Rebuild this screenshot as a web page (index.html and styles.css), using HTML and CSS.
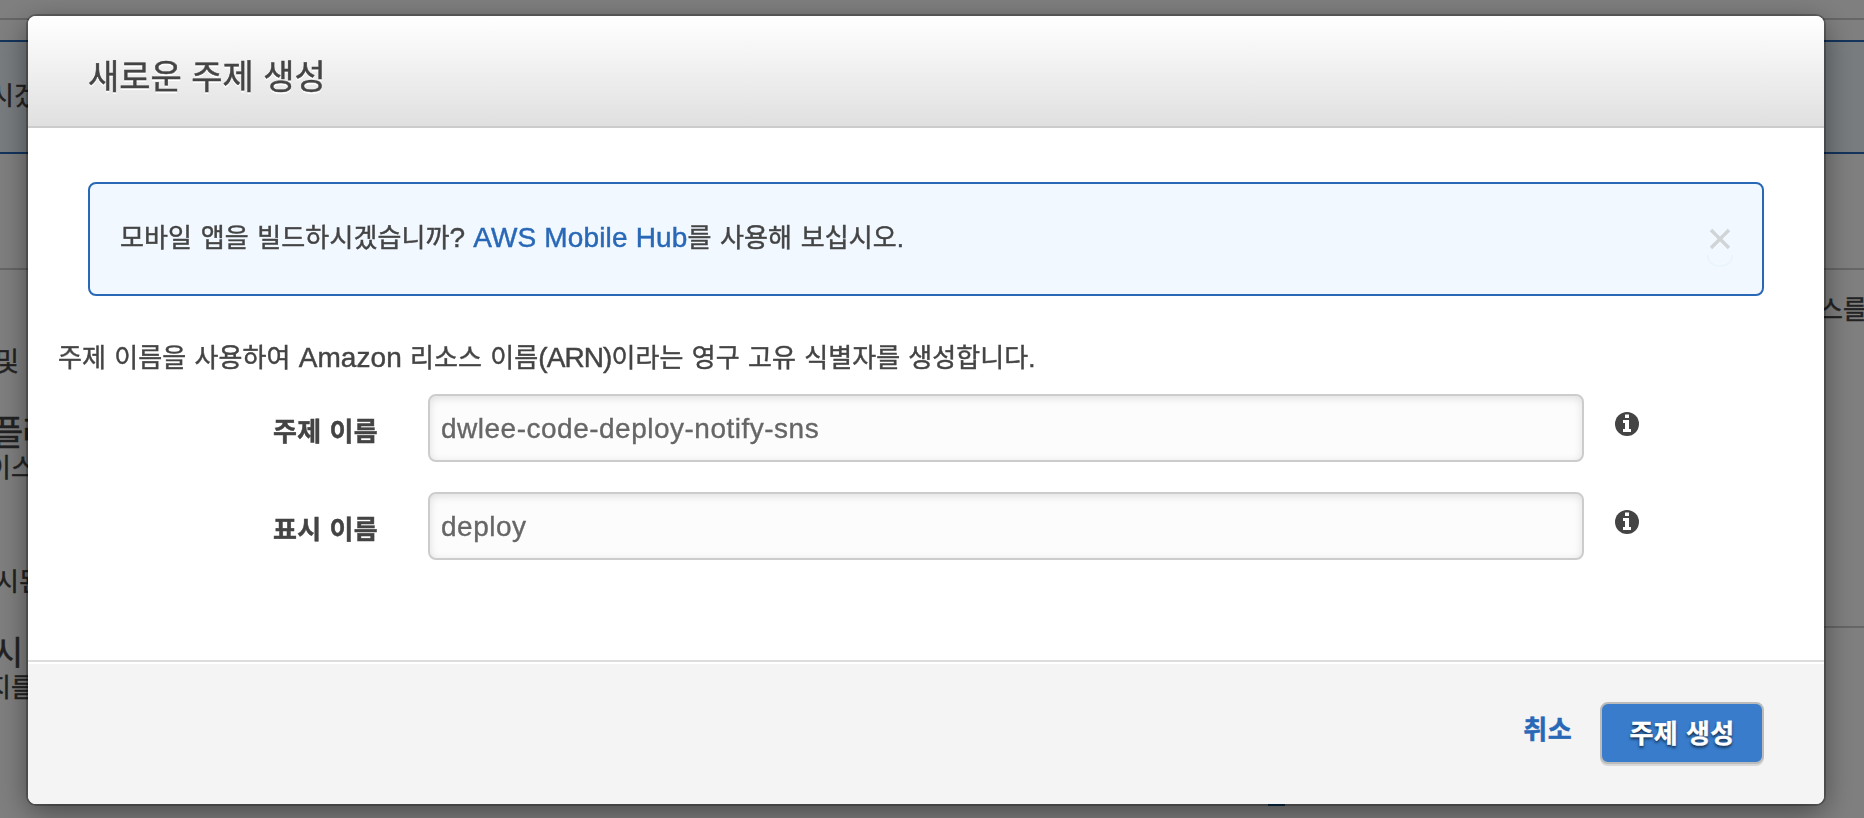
FILE: index.html
```html
<!DOCTYPE html>
<html lang="ko">
<head>
<meta charset="utf-8">
<title>새로운 주제 생성</title>
<link rel="stylesheet" href="styles.css">
</head>
<body>
<div class="page">
  <div class="page-banner"><span class="banner-text">시겠</span></div>
  <div class="page-columns">
    <div class="page-left">
      <p class="line line-and">및</p>
      <p class="line line-platform">플리</p>
      <p class="line line-device">이스</p>
      <p class="line line-published">시된</p>
      <p class="line line-publish">시</p>
      <p class="line line-message">지를</p>
    </div>
    <div class="page-right">
      <p class="line line-service">스를</p>
    </div>
  </div>
  <div class="page-action"></div>
</div>
<div class="overlay">
  <div class="modal">
    <header class="modal-header"><h1 class="modal-title">새로운 주제 생성</h1></header>
    <main class="modal-body">
      <div class="alert">
        <p class="text alert-text">모바일 앱을 빌드하시겠습니까<span class="latin">? <a class="link">AWS Mobile Hub</a></span>를 사용해 보십시오.</p>
        <svg class="close" width="28" height="44" viewBox="0 0 28 44">
          <path d="M5 6 23 24M23 6 5 24" fill="none" stroke="#d0d4d6" stroke-width="3.4"/>
          <path d="M1.5 31C2 46 26 46 26.500 31" fill="none" stroke="#eaf3fc" stroke-width="1.500"/>
        </svg>
      </div>
      <p class="text intro">주제 이름을 사용하여 <span class="latin">Amazon</span> 리소스 이름<span class="latin arn">(ARN)</span>이라는 영구 고유 식별자를 생성합니다.</p>
      <div class="field">
        <label class="field-label" for="topic">주제 이름</label>
        <input class="field-input" id="topic" type="text" value="dwlee-code-deploy-notify-sns">
        <svg class="info" width="24" height="24" viewBox="0 0 24 24"><circle cx="12" cy="12" r="12" fill="#444"/><path d="M10 2.500h4v3.500h-4zM8 8h6v9h2v3H8v-3h2v-6H8z" fill="#fff"/></svg>
      </div>
      <div class="field">
        <label class="field-label" for="display">표시 이름</label>
        <input class="field-input" id="display" type="text" value="deploy">
        <svg class="info" width="24" height="24" viewBox="0 0 24 24"><circle cx="12" cy="12" r="12" fill="#444"/><path d="M10 2.500h4v3.500h-4zM8 8h6v9h2v3H8v-3h2v-6H8z" fill="#fff"/></svg>
      </div>
    </main>
    <footer class="modal-footer">
      <a class="cancel">취소</a>
      <button class="submit" type="button">주제 생성</button>
    </footer>
  </div>
</div>
</body>
</html>
```
FILE: styles.css
```css
* { box-sizing: border-box; }
body, p, h1 { margin: 0; }
body {
  height: 818px;
  overflow: hidden;
  background: #fff;
  color: #444;
  font: 26px/40px "Liberation Sans", "Noto Sans CJK KR", sans-serif;
  white-space: nowrap;
  -webkit-text-stroke-width: .45px;
}

/* page under the dialog */
.page { height: 818px; padding-top: 18px; overflow: hidden; }
.page-banner {
  height: 136px;
  border-top: 2px solid #ccc;
  padding-top: 20px;
}
.banner-text {
  display: block;
  height: 114px;
  padding-top: 34px;
  border: solid #2868b7;
  border-width: 2px 0;
  background: #f1f8ff;
  text-indent: -10px;
}
.page-columns {
  display: flex;
  justify-content: space-between;
  height: 534px;
  margin-top: 114px;
  border-top: 2px solid #ccc;
}
.page-left { width: 60px; }
.page-right {
  width: 60px;
  height: 358px;
  padding-top: 20px;
  border-bottom: 2px solid #ccc;
}
.line-and { margin-top: 72px; text-indent: -5px; }
.line-platform { margin-top: 31px; font-size: 34px; text-indent: -8px; letter-spacing: -1.5px; }
.line-device { margin-top: -5px; text-indent: -13px; }
.line-published { margin-top: 74px; text-indent: -5px; }
.line-publish { margin-top: 31px; font-size: 34px; text-indent: -8px; }
.line-message { margin-top: -5px; text-indent: -13px; }
.line-service { text-indent: 15px; }
.page-action { width: 17px; height: 4px; margin-left: 1268px; background: #146eb4; }

/* dialog */
.overlay {
  position: fixed;
  inset: 0;
  padding: 16px 40px 14px 28px;
  background: rgba(0, 0, 0, .5);
}
.modal {
  display: flex;
  flex-direction: column;
  height: 788px;
  border-radius: 8px;
  background: #fff;
  overflow: hidden;
  box-shadow: 0 0 0 2px rgba(0, 0, 0, .25), 0 8px 30px rgba(0, 0, 0, .45);
}
.modal-header {
  height: 112px;
  padding: 36px 60px 0;
  border-bottom: 2px solid #ccc;
  background: linear-gradient(#fff, #e0e0e0);
}
.modal-title {
  font-size: 34px;
  font-weight: 400;
  line-height: 50px;
  text-shadow: 0 2px 0 #fff;
}
.modal-body { flex: 1; padding: 54px 30px 0; }
.alert {
  display: flex;
  justify-content: space-between;
  height: 114px;
  margin: 0 30px 42px;
  padding: 34px 28px 0 30px;
  border: 2px solid #2868b7;
  border-radius: 8px;
  background: #f1f8ff;
}
.text { line-height: 40px; word-spacing: .9px; letter-spacing: .08px; }
.alert-text { word-spacing: 1.2px; letter-spacing: .12px; }
.latin { font-size: 28px; line-height: 1; word-spacing: 0; }
.arn { letter-spacing: -.9px; }
.link { color: #2868b7; letter-spacing: .15px; }
.close { margin: 6px 0 0; }
.intro { height: 56px; }
.field { display: flex; height: 68px; margin-bottom: 30px; }
.field-label {
  width: 320px;
  margin-right: 50px;
  padding-top: 18px;
  text-align: right;
  font-weight: 700;
  letter-spacing: .3px;
  word-spacing: .5px;
}
.field-input {
  width: 1156px;
  padding: 2px 11px 0;
  border: 2px solid #ccc;
  border-radius: 8px;
  background: #fcfcfc;
  box-shadow: inset 0 2px 8px rgba(0, 0, 0, .12);
  color: #666;
  font: 28px "Liberation Sans", sans-serif;
  letter-spacing: .5px;
  -webkit-text-stroke-width: .35px;
}
.info { margin: 18px 0 0 31px; }
.modal-footer {
  display: flex;
  justify-content: flex-end;
  height: 144px;
  padding: 40px 60px 0;
  border-top: 2px solid #ddd;
  background: #f4f4f4;
  box-shadow: inset 0 2px 0 #fff;
}
.cancel {
  margin: 8px 28px 0 0;
  color: #2868b7;
  font-weight: 700;
  letter-spacing: .4px;
}
.submit {
  width: 164px;
  height: 62px;
  padding: 2px 0 0;
  border: 2px solid #bbb;
  border-radius: 8px;
  background: #387ccb;
  box-shadow: 0 2px 0 #d8d8d8;
  color: #fff;
  font: 700 26px/40px "Liberation Sans", "Noto Sans CJK KR", sans-serif;
  letter-spacing: .3px;
  word-spacing: .5px;
  text-shadow: 0 2px 3px rgba(0, 0, 0, .7);
  -webkit-text-stroke-width: .35px;
}
```
